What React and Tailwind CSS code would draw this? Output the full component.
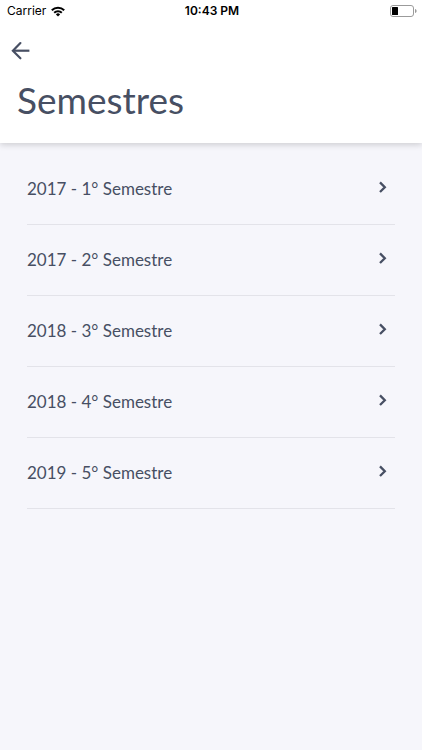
const SEMESTERS = [
  { id: 1, year: 2017 },
  { id: 2, year: 2017 },
  { id: 3, year: 2018 },
  { id: 4, year: 2018 },
  { id: 5, year: 2019 },
];

function WifiIcon() {
  return (
    <svg width="14" height="11" viewBox="0 0 14 11" fill="none" stroke="#000" strokeWidth="2" aria-hidden="true">
      <path d="M0.8 4.2a8.8 8.8 0 0 1 12.4 0" />
      <path d="M3.2 6.7a5.4 5.4 0 0 1 7.6 0" />
      <path d="M7 10.6L4.9 8.4a3 3 0 0 1 4.2 0z" fill="#000" stroke="none" />
    </svg>
  );
}

function BatteryIcon() {
  return (
    <svg width="27" height="12" viewBox="0 0 27 12" aria-hidden="true">
      <rect x="0.5" y="0.5" width="23" height="11" rx="2.5" fill="#fff" stroke="#9b9b9b" />
      <rect x="2" y="2" width="6" height="8" rx="0.5" fill="#000" />
      <path d="M25 4v4c1-.4 1.6-1.1 1.6-2s-.6-1.6-1.6-2z" fill="#9b9b9b" />
    </svg>
  );
}

function BackIcon() {
  return (
    <svg width="26" height="26" viewBox="0 0 26 26" fill="none" stroke="currentColor" strokeWidth="2.2" strokeLinecap="round" aria-hidden="true">
      <path d="M21.4 12.7H5.2" strokeLinecap="butt" />
      <path d="M12.4 5.1L4.9 12.7l7.5 7.6" />
    </svg>
  );
}

function ChevronIcon() {
  return (
    <svg width="24" height="24" viewBox="0 0 24 24" fill="none" stroke="currentColor" strokeWidth="2.3" aria-hidden="true">
      <path d="M9 5.4l4.8 4.8L9 15" />
    </svg>
  );
}

function StatusBar() {
  return (
    <div className="grid grid-cols-3 items-center h-[22px] pl-[7px] pr-[5px] font-['Inter',sans-serif] text-xs text-black">
      <span className="flex items-center gap-[5px]">
        Carrier <WifiIcon />
      </span>
      <span className="text-center font-semibold">10:43 PM</span>
      <span className="flex justify-end">
        <BatteryIcon />
      </span>
    </div>
  );
}

export default function App() {
  return (
    <div className="min-h-screen bg-[#f6f6fb] font-['Lato',sans-serif] text-[#474f63]">
      {/* Header */}
      <header className="bg-white pb-5 shadow-[0_2px_6px_rgba(0,0,0,0.16)]">
        <StatusBar />
        <div className="px-2 pt-4">
          <button type="button" aria-label="Voltar" className="block">
            <BackIcon />
          </button>
        </div>
        <h1 className="px-[17px] pt-[13px] text-[37px] leading-[46px]">Semestres</h1>
      </header>

      {/* Semester list */}
      <ul className="px-[27px] pt-[11px]">
        {SEMESTERS.map((semester) => (
          <li key={semester.id} className="border-b border-[#e3e3e9]">
            <button type="button" className="flex items-center justify-between w-full h-[70px] text-left text-[17px]">
              <span>
                {semester.year} - {semester.id}° Semestre
              </span>
              <ChevronIcon />
            </button>
          </li>
        ))}
      </ul>
    </div>
  );
}
